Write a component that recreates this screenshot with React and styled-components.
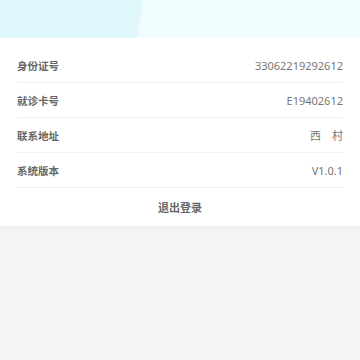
import styled, { createGlobalStyle } from "styled-components";

const GlobalStyle = createGlobalStyle`
  html, body {
    margin: 0;
    padding: 0;
    background: #f4f4f4;
    font-family: "Noto Sans", "Noto Sans CJK SC", sans-serif;
  }
`;

const rows = [
  { label: "身份证号", value: "33062219292612" },
  { label: "就诊卡号", value: "E19402612" },
  { label: "联系地址", value: "西\u3000村" },
  { label: "系统版本", value: "V1.0.1" },
];

const App = () => {
  return (
    <Page>
      <GlobalStyle />
      <Header />
      <Card>
        {rows.map((r) => (
          <Row key={r.label}>
            <Label>{r.label}</Label>
            <Value>{r.value}</Value>
          </Row>
        ))}
        <Logout>退出登录</Logout>
      </Card>
    </Page>
  );
};

const Page = styled.div`
  width: 360px;
  height: 360px;
  background: #f4f4f4;
  overflow: hidden;
`;

const Header = styled.div`
  height: 38px;
  background: radial-gradient(
    circle 200px at -58px -7px,
    #dff6fa 199px,
    #f0fcfe 200.5px
  );
`;

const Card = styled.div`
  background: #fff;
  padding: 10px 17px 0;
  box-shadow: 0 3px 4px rgba(0, 0, 0, 0.03);
`;

const Row = styled.div`
  display: flex;
  justify-content: space-between;
  align-items: center;
  height: 35px;
  border-bottom: 1px solid #f0f0f0;
  box-sizing: border-box;
`;

const Label = styled.span`
  font-size: 10.5px;
  font-weight: 600;
  color: #666;
`;

const Value = styled.span`
  font-size: 11px;
  color: #777;
`;

const Logout = styled.div`
  height: 38px;
  display: flex;
  align-items: center;
  justify-content: center;
  font-size: 11px;
  font-weight: 600;
  color: #666;
`;

export default App;
